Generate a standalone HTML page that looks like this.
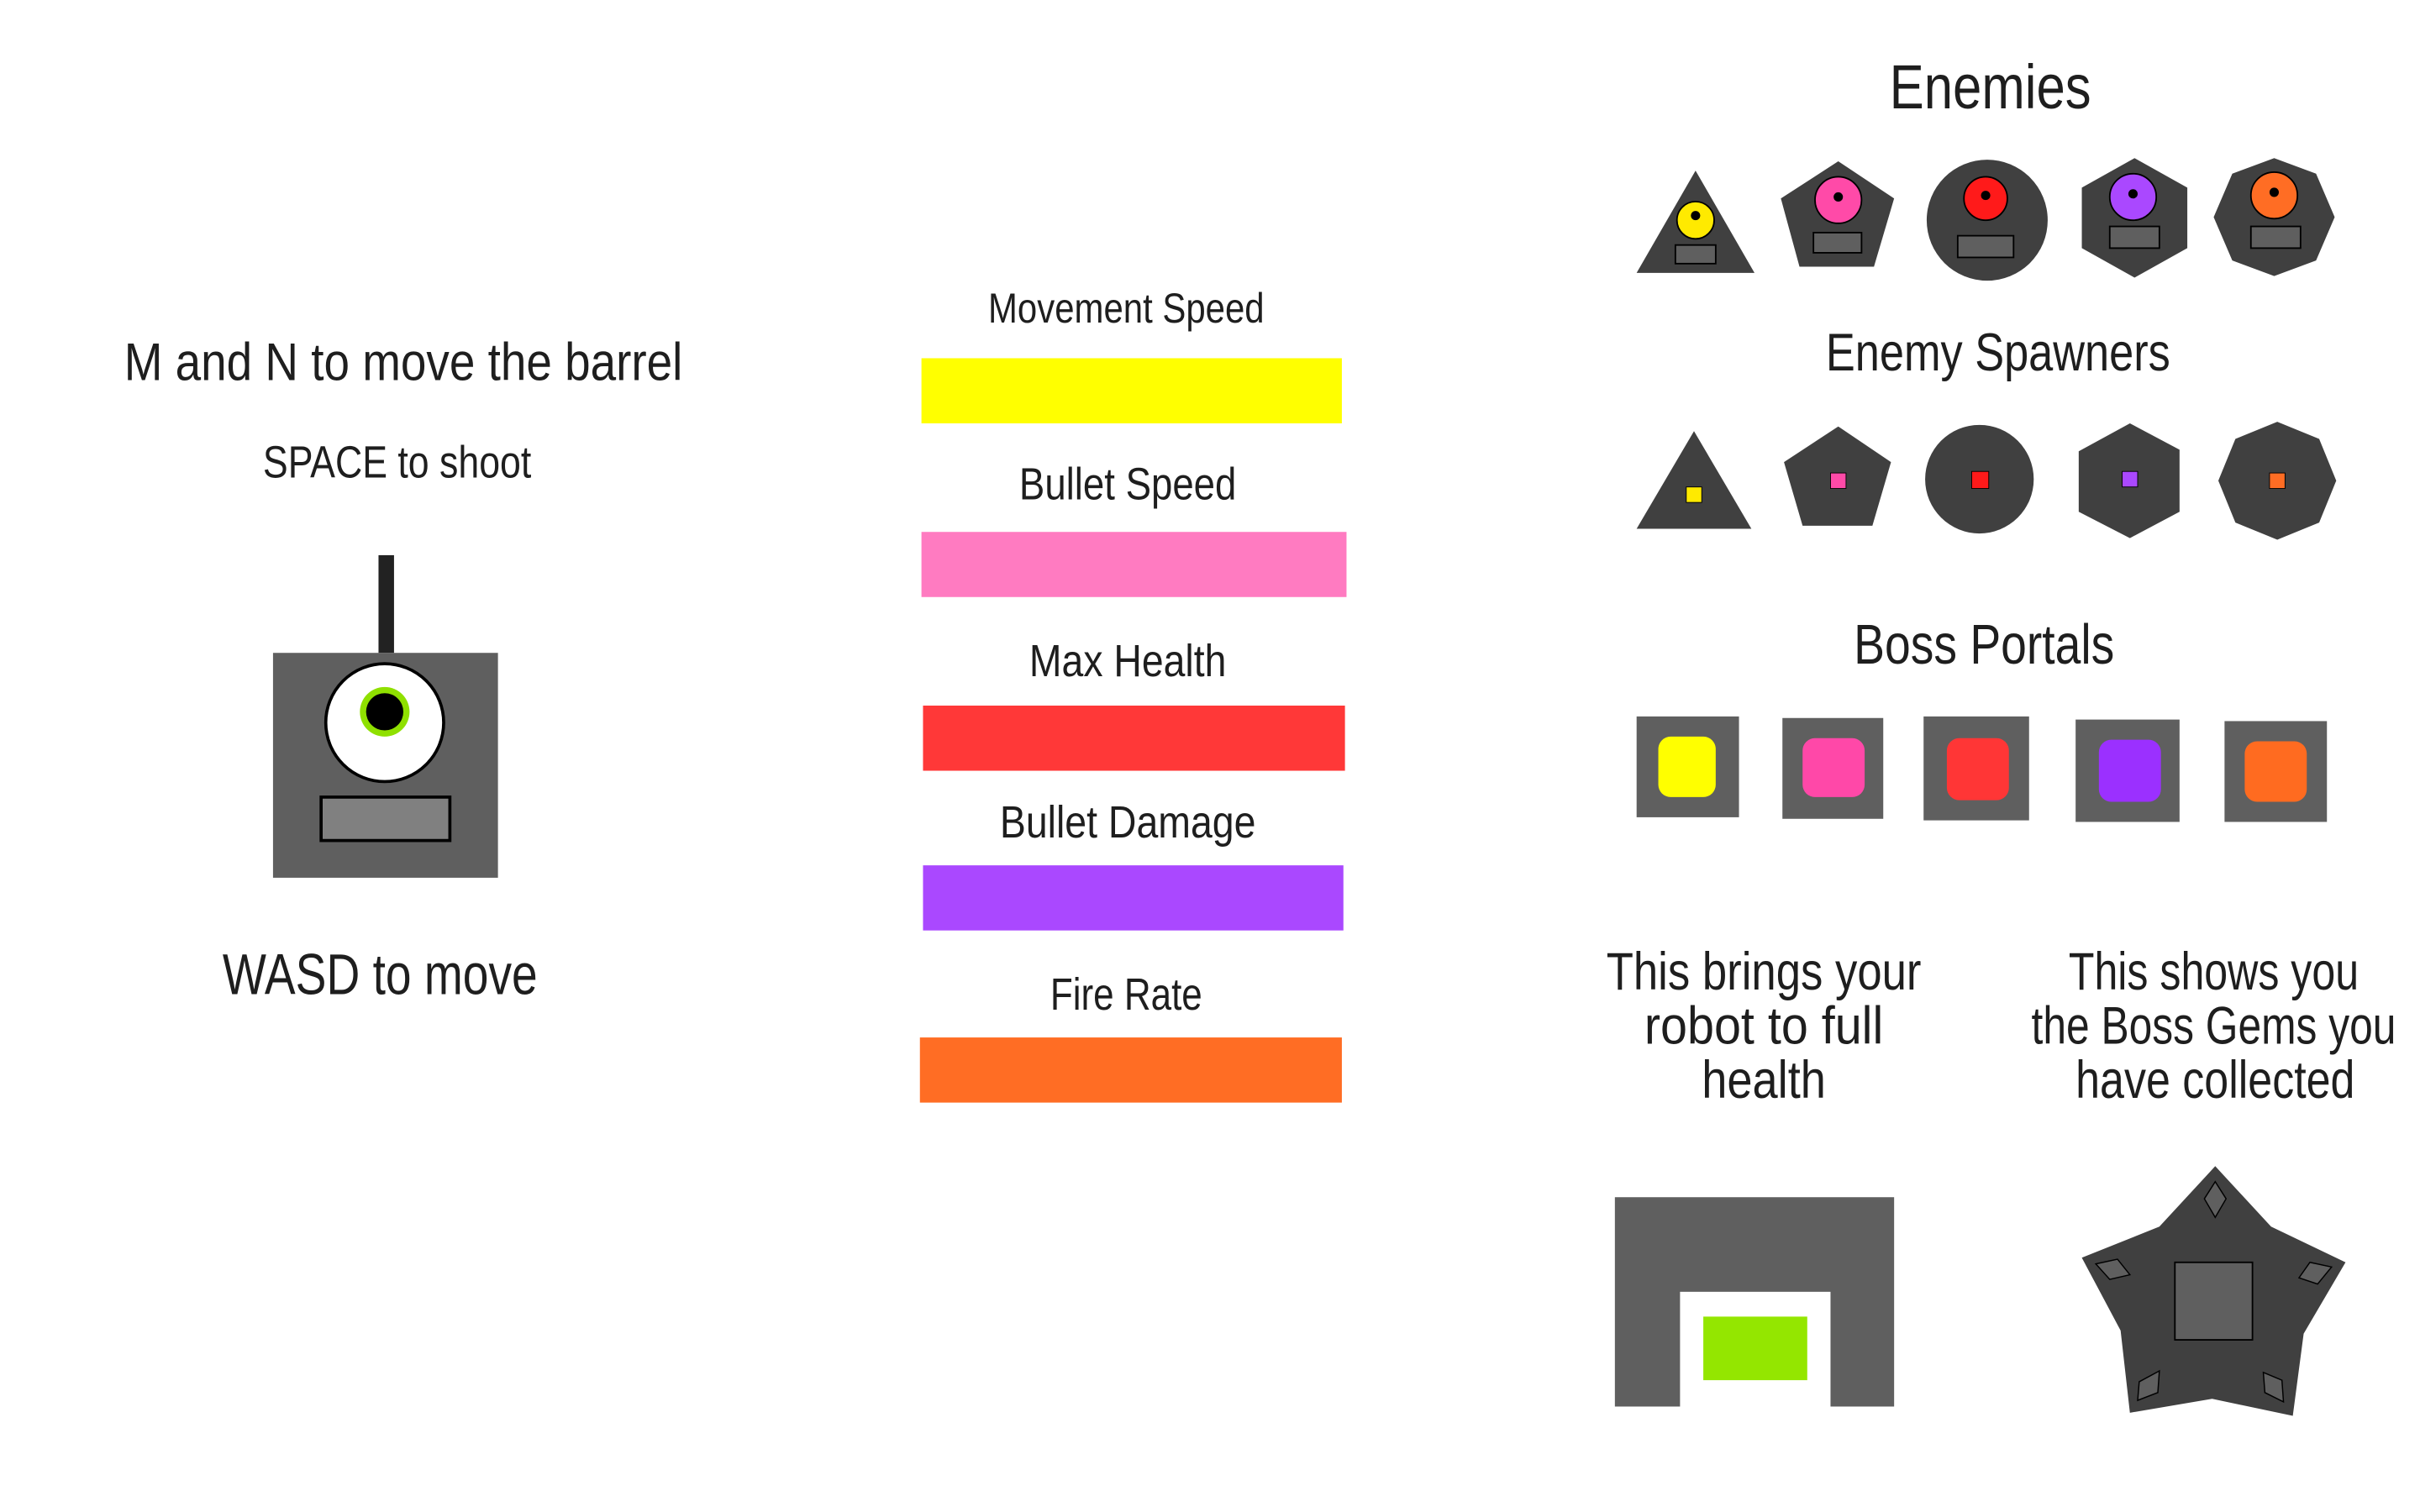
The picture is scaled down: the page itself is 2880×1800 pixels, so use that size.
<!DOCTYPE html>
<html><head><meta charset="utf-8"><style>
html,body{margin:0;padding:0;background:#fff;width:2880px;height:1800px;overflow:hidden}
svg{display:block}
text{font-family:"Liberation Sans Narrow","Liberation Sans",sans-serif;fill:#1e1e1e;text-anchor:middle}
</style></head><body>
<svg width="2880" height="1800" viewBox="0 0 1560 975" xmlns="http://www.w3.org/2000/svg">
<rect width="1560" height="975" fill="#fff"/>
<!-- left -->
<text x="260" y="245" font-size="34" textLength="360" lengthAdjust="spacingAndGlyphs">M and N to move the barrel</text>
<text x="256" y="308" font-size="29" textLength="173" lengthAdjust="spacingAndGlyphs">SPACE to shoot</text>
<rect x="244" y="358" width="10" height="63" fill="#222"/>
<rect x="176" y="421" width="145" height="145" fill="#5f5f5f"/>
<ellipse cx="248" cy="466" rx="38" ry="38" fill="#fff" stroke="#000" stroke-width="2"/>
<circle cx="248" cy="459" r="16" fill="#8fe000"/>
<circle cx="248" cy="459" r="12" fill="#000"/>
<rect x="207" y="514" width="83" height="28" fill="#808080" stroke="#000" stroke-width="2"/>
<text x="245" y="641" font-size="37" textLength="203" lengthAdjust="spacingAndGlyphs">WASD to move</text>
<!-- bars -->
<text x="726" y="208" font-size="27" textLength="178" lengthAdjust="spacingAndGlyphs">Movement Speed</text>
<rect x="594" y="231" width="271" height="42" fill="#ffff00"/>
<text x="727" y="322" font-size="29" textLength="140" lengthAdjust="spacingAndGlyphs">Bullet Speed</text>
<rect x="594" y="343" width="274" height="42" fill="#ff7bc1"/>
<text x="727" y="436" font-size="29" textLength="127" lengthAdjust="spacingAndGlyphs">Max Health</text>
<rect x="595" y="455" width="272" height="42" fill="#ff3838"/>
<text x="727" y="540" font-size="29" textLength="165" lengthAdjust="spacingAndGlyphs">Bullet Damage</text>
<rect x="595" y="558" width="271" height="42" fill="#aa48ff"/>
<text x="726" y="651" font-size="29" textLength="98" lengthAdjust="spacingAndGlyphs">Fire Rate</text>
<rect x="593" y="669" width="272" height="42" fill="#ff6d24"/>
<!-- enemies -->
<text x="1283" y="70" font-size="40" textLength="130" lengthAdjust="spacingAndGlyphs">Enemies</text>
<polygon points="1093,110 1055,176 1131,176" fill="#404040"/>
<circle cx="1093" cy="142" r="12" fill="#ffea00" stroke="#000" stroke-width="1"/>
<circle cx="1093" cy="139" r="3" fill="#000"/>
<rect x="1080" y="158" width="26" height="12" fill="#5f5f5f" stroke="#000" stroke-width="1"/>
<polygon points="1185,104 1221,128 1208,172 1160,172 1148,128" fill="#404040"/>
<circle cx="1185" cy="129" r="15" fill="#ff4aa8" stroke="#000" stroke-width="1"/>
<circle cx="1185" cy="127" r="3" fill="#000"/>
<rect x="1169" y="150" width="31" height="13" fill="#5f5f5f" stroke="#000" stroke-width="1"/>
<circle cx="1281" cy="142" r="39" fill="#404040"/>
<circle cx="1280" cy="128" r="14" fill="#ff1a1a" stroke="#000" stroke-width="1"/>
<circle cx="1280" cy="126" r="3" fill="#000"/>
<rect x="1262" y="152" width="36" height="14" fill="#5f5f5f" stroke="#000" stroke-width="1"/>
<polygon points="1376,102 1410,121 1410,160 1376,179 1342,160 1342,121" fill="#404040"/>
<circle cx="1375" cy="127" r="15" fill="#aa48ff" stroke="#000" stroke-width="1"/>
<circle cx="1375" cy="125" r="3" fill="#000"/>
<rect x="1360" y="146" width="32" height="14" fill="#5f5f5f" stroke="#000" stroke-width="1"/>
<polygon points="1466,102 1493,112 1505,140 1493,168 1466,178 1439,168 1427,140 1439,112" fill="#404040"/>
<circle cx="1466" cy="126" r="15" fill="#ff6d24" stroke="#000" stroke-width="1"/>
<circle cx="1466" cy="124" r="3" fill="#000"/>
<rect x="1451" y="146" width="32" height="14" fill="#5f5f5f" stroke="#000" stroke-width="1"/>
<!-- spawners -->
<text x="1288" y="239" font-size="34" textLength="222" lengthAdjust="spacingAndGlyphs">Enemy Spawners</text>
<polygon points="1092,278 1055,341 1129,341" fill="#404040"/>
<rect x="1087" y="314" width="10" height="10" fill="#ffea00" stroke="#000" stroke-width="0.5"/>
<polygon points="1185,275 1219,298 1207,339 1162,339 1150,298" fill="#404040"/>
<rect x="1180" y="305" width="10" height="10" fill="#ff4aa8" stroke="#000" stroke-width="0.5"/>
<circle cx="1276" cy="309" r="35" fill="#404040"/>
<rect x="1271" y="304" width="11" height="11" fill="#ff1a1a" stroke="#000" stroke-width="0.5"/>
<polygon points="1373,273 1405,290 1405,330 1373,347 1340,330 1340,291" fill="#404040"/>
<rect x="1368" y="304" width="10" height="10" fill="#aa48ff" stroke="#000" stroke-width="0.5"/>
<polygon points="1468,272 1495,283 1506,310 1495,337 1468,348 1441,337 1430,310 1441,283" fill="#404040"/>
<rect x="1463" y="305" width="10" height="10" fill="#ff6d24" stroke="#000" stroke-width="0.5"/>
<!-- portals -->
<text x="1279" y="428" font-size="36" textLength="168" lengthAdjust="spacingAndGlyphs">Boss Portals</text>
<rect x="1055" y="462" width="66" height="65" fill="#5f5f5f"/><rect x="1069" y="475" width="37" height="39" rx="8" fill="#ffff00"/>
<rect x="1149" y="463" width="65" height="65" fill="#5f5f5f"/><rect x="1162" y="476" width="40" height="38" rx="8" fill="#ff48a8"/>
<rect x="1240" y="462" width="68" height="67" fill="#5f5f5f"/><rect x="1255" y="476" width="40" height="40" rx="8" fill="#ff3636"/>
<rect x="1338" y="464" width="67" height="66" fill="#5f5f5f"/><rect x="1353" y="477" width="40" height="40" rx="8" fill="#9b30ff"/>
<rect x="1434" y="465" width="66" height="65" fill="#5f5f5f"/><rect x="1447" y="478" width="40" height="39" rx="8" fill="#ff6b20"/>
<!-- descriptions -->
<text font-size="34" x="1137" y="638" textLength="203" lengthAdjust="spacingAndGlyphs">This brings your</text>
<text font-size="34" x="1137" y="673" textLength="154" lengthAdjust="spacingAndGlyphs">robot to full</text>
<text font-size="34" x="1137" y="708" textLength="80" lengthAdjust="spacingAndGlyphs">health</text>
<text font-size="34" x="1427" y="638" textLength="187" lengthAdjust="spacingAndGlyphs">This shows you</text>
<text font-size="34" x="1427" y="673" textLength="235" lengthAdjust="spacingAndGlyphs">the Boss Gems you</text>
<text font-size="34" x="1428" y="708" textLength="180" lengthAdjust="spacingAndGlyphs">have collected</text>
<!-- health station -->
<rect x="1041" y="772" width="180" height="135" fill="#5f5f5f"/>
<rect x="1083" y="833" width="97" height="75" fill="#fff"/>
<rect x="1098" y="849" width="67" height="41" fill="#94e600"/>
<!-- star -->
<polygon points="1428,752 1464,791 1512,814 1485,860 1478,913 1426,902 1373,911 1367,858 1342,811 1392,791" fill="#404040"/>
<rect x="1402" y="814" width="50" height="50" fill="#5f5f5f" stroke="#000" stroke-width="1"/>
<polygon points="1428,762 1435,773 1428,785 1421,773" fill="#5f5f5f" stroke="#000" stroke-width="0.8"/>
<polygon points="1351,815 1365,812 1373,822 1360,825" fill="#5f5f5f" stroke="#000" stroke-width="0.8"/>
<polygon points="1489,814 1503,817 1494,828 1482,824" fill="#5f5f5f" stroke="#000" stroke-width="0.8"/>
<polygon points="1379,891 1392,884 1391,898 1378,903" fill="#5f5f5f" stroke="#000" stroke-width="0.8"/>
<polygon points="1459,885 1471,890 1472,904 1460,898" fill="#5f5f5f" stroke="#000" stroke-width="0.8"/>
</svg>
</body></html>
